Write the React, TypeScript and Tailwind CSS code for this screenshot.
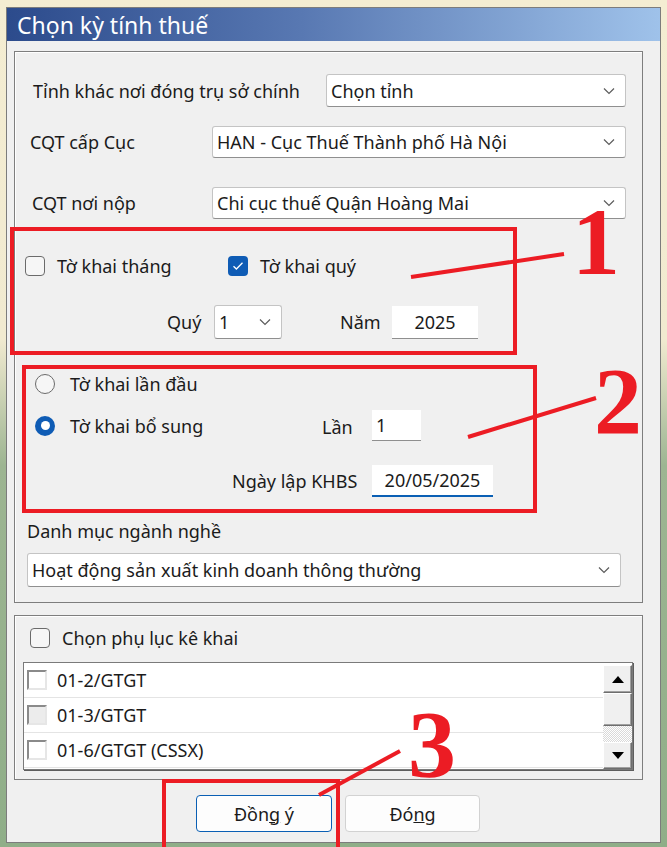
import React from 'react';

const font = "font-['Noto_Sans','Open_Sans',sans-serif]";

// chevron used in Win11 combo boxes
const Chevron: React.FC = () => (
  <svg width="12" height="8" viewBox="0 0 12 8" className="shrink-0">
    <path d="M1 1.5 L6 6.5 L11 1.5" fill="none" stroke="#5c5c5c" strokeWidth="1.2" />
  </svg>
);

type SelectProps = { value: string; className: string };

const Select: React.FC<SelectProps> = ({ value, className }) => (
  <div
    className={`flex items-center justify-between bg-white border border-[#c4c4c4] border-b-[#8f8f8f] rounded-[3px] pl-[4px] pr-[10px] ${className}`}
  >
    <span className="whitespace-nowrap">{value}</span>
    <Chevron />
  </div>
);

const Checkbox: React.FC<{ checked?: boolean }> = ({ checked }) =>
  checked ? (
    <div className="w-[20px] h-[20px] rounded-[4px] bg-[#0f5cb5] flex items-center justify-center shrink-0">
      <svg width="12" height="10" viewBox="0 0 12 10">
        <path d="M1.5 5.2 L4.4 8 L10.5 1.8" fill="none" stroke="#fff" strokeWidth="1.3" />
      </svg>
    </div>
  ) : (
    <div className="w-[20px] h-[20px] rounded-[4px] border border-[#6b6b6b] bg-[#f6f6f6] shrink-0" />
  );

const Radio: React.FC<{ checked?: boolean }> = ({ checked }) =>
  checked ? (
    <div className="w-[20px] h-[20px] rounded-full bg-[#0f5cb5] flex items-center justify-center shrink-0">
      <div className="w-[9px] h-[9px] rounded-full bg-white" />
    </div>
  ) : (
    <div className="w-[20px] h-[20px] rounded-full border border-[#6b6b6b] bg-[#f6f6f6] shrink-0" />
  );

// classic flat checkbox inside the list view
const FlatCheck: React.FC<{ grey?: boolean }> = ({ grey }) => (
  <div
    className={`w-[20px] h-[20px] border-2 border-t-[#8a8a8a] border-l-[#8a8a8a] border-r-[#e6e6e6] border-b-[#e6e6e6] shrink-0 ${
      grey ? 'bg-[#ececec]' : 'bg-white'
    }`}
  />
);

const ScrollButton: React.FC<{ up?: boolean; className: string }> = ({ up, className }) => (
  <div
    className={`bg-[#f0f0f0] border border-t-white border-l-white border-r-[#6e6e6e] border-b-[#6e6e6e] shadow-[inset_-1px_-1px_0_#a0a0a0] flex items-center justify-center ${className}`}
  >
    {up !== undefined && (
      <svg width="12" height="7" viewBox="0 0 12 7">
        {up ? <path d="M0 7 L6 0 L12 7 Z" fill="#000" /> : <path d="M0 0 L6 7 L12 0 Z" fill="#000" />}
      </svg>
    )}
  </div>
);

const rows = [
  { label: '01-2/GTGT', grey: false },
  { label: '01-3/GTGT', grey: true },
  { label: '01-6/GTGT (CSSX)', grey: false },
];

const App: React.FC = () => {
  return (
    <div
      className={`relative w-[667px] h-[847px] overflow-hidden pt-[7px] pl-[6px] text-[18px] leading-[22px] text-[#1b1b1b] ${font} bg-[linear-gradient(180deg,#f4edd2_0%,#f1ead0_40%,#9db592_55%,#8fae88_100%)]`}
    >
      {/* window */}
      <div className="w-[655px] h-[836px] border border-[#7c7c7c] bg-[#f0f0f0] flex flex-col">
        <div className="h-[33px] bg-[linear-gradient(90deg,#2c4b8c_0%,#5878b2_45%,#9fc2ea_100%)] flex items-center pl-[10px] text-white text-[23px] leading-[28px]">
          Chọn kỳ tính thuế
        </div>

        {/* group 1 */}
        <div className="mt-[10px] ml-[7px] w-[629px] h-[552px] border border-[#7e7e7e] shadow-[inset_1px_1px_0_#ffffff] flex flex-col pt-[22px]">
          <div className="flex items-center h-[33px] pl-[18px]">
            <span className="w-[293px] whitespace-nowrap">Tỉnh khác nơi đóng trụ sở chính</span>
            <Select value="Chọn tỉnh" className="w-[300px] h-[33px]" />
          </div>
          <div className="flex items-center h-[32px] pl-[15px] mt-[19px]">
            <span className="w-[182px]">CQT cấp Cục</span>
            <Select value="HAN - Cục Thuế Thành phố Hà Nội" className="w-[414px] h-[32px]" />
          </div>
          <div className="flex items-center h-[32px] pl-[17px] mt-[29px]">
            <span className="w-[180px]">CQT nơi nộp</span>
            <Select value="Chi cục thuế Quận Hoàng Mai" className="w-[414px] h-[32px]" />
          </div>

          {/* annotated box 1 */}
          <div className="mt-[8px] -ml-[5px] w-[507px] h-[128px] border-4 border-[#ec1c24] flex flex-col">
            <div className="mt-[25px] flex items-center h-[20px] pl-[11px]">
              <div className="w-[203px] flex items-center gap-[12px]">
                <Checkbox />
                <span>Tờ khai tháng</span>
              </div>
              <div className="flex items-center gap-[12px]">
                <Checkbox checked />
                <span>Tờ khai quý</span>
              </div>
            </div>
            <div className="mt-[29px] flex items-center h-[34px] pl-[153px]">
              <span className="w-[47px]">Quý</span>
              <Select value="1" className="w-[68px] h-[34px]" />
              <span className="ml-[58px] w-[52px]">Năm</span>
              <div className="w-[86px] h-[33px] bg-white border-b border-[#8f8f8f] flex items-center justify-center">
                2025
              </div>
            </div>
          </div>

          {/* annotated box 2 */}
          <div className="mt-[10px] ml-[7px] w-[515px] h-[148px] border-4 border-[#ec1c24] flex flex-col pl-[9px]">
            <div className="mt-[5px] flex items-center h-[20px] gap-[15px]">
              <Radio />
              <span>Tờ khai lần đầu</span>
            </div>
            <div className="mt-[16px] flex items-center h-[31px]">
              <div className="w-[287px] flex items-center gap-[15px]">
                <Radio checked />
                <span>Tờ khai bổ sung</span>
              </div>
              <span className="w-[50px] pt-[3px]">Lần</span>
              <div className="w-[49px] h-[31px] bg-white border-b border-[#8f8f8f] flex items-center pl-[4px]">1</div>
            </div>
            <div className="mt-[24px] flex items-center h-[32px] pl-[197px]">
              <span className="w-[140px] whitespace-nowrap">Ngày lập KHBS</span>
              <div className="w-[121px] h-[32px] bg-white border-b-2 border-[#0a5fb4] flex items-center justify-center">
                20/05/2025
              </div>
            </div>
          </div>

          <div className="mt-[7px] pl-[12px] h-[20px]">Danh mục ngành nghề</div>
          <Select value="Hoạt động sản xuất kinh doanh thông thường" className="mt-[13px] ml-[12px] w-[594px] h-[34px]" />
        </div>

        {/* group 2 */}
        <div className="mt-[12px] ml-[7px] w-[629px] h-[165px] border border-[#7e7e7e] shadow-[inset_1px_1px_0_#ffffff] flex flex-col pt-[12px]">
          <div className="flex items-center h-[20px] pl-[15px] gap-[12px]">
            <Checkbox />
            <span>Chọn phụ lục kê khai</span>
          </div>
          <div className="mt-[14px] ml-[8px] w-[610px] h-[108px] border border-[#7a7a7a] shadow-[1px_1px_0_#5e5e5e] bg-white flex">
            <div className="flex-1 flex flex-col">
              {rows.map((r) => (
                <div key={r.label} className="h-[35px] flex items-center gap-[10px] pl-[3px] border-b border-[#e4e4e4]">
                  <FlatCheck grey={r.grey} />
                  <span>{r.label}</span>
                </div>
              ))}
            </div>
            <div className="w-[29px] flex flex-col pt-[2px]">
              <ScrollButton up className="h-[28px]" />
              <ScrollButton className="h-[33px]" />
              <div className="h-[16px] bg-[repeating-conic-gradient(#ffffff_0%_25%,#d9d9d9_0%_50%)] bg-[length:2px_2px]" />
              <ScrollButton up={false} className="h-[27px]" />
            </div>
          </div>
        </div>

        {/* buttons */}
        <div className="mt-[15px] pl-[189px] flex gap-[13px]">
          <button className="w-[136px] h-[37px] rounded-[4px] border border-[#0a5fb4] bg-[#fdfdfd] text-[18px]">
            Đồn<span className="underline">g</span> ý
          </button>
          <button className="w-[135px] h-[37px] rounded-[4px] border border-[#d2d2d2] bg-[#fdfdfd] text-[18px]">
            Đó<span className="underline">n</span>g
          </button>
        </div>
      </div>

      {/* annotations drawn over the dialog */}
      <div className="absolute left-[162px] top-[779px] w-[178px] h-[80px] border-4 border-[#ec1c24] pointer-events-none" />
      <svg className="absolute inset-0 pointer-events-none" width="667" height="847">
        <line x1="411" y1="277" x2="564" y2="254" stroke="#ec1c24" strokeWidth="4" />
        <line x1="468" y1="437" x2="596" y2="398" stroke="#ec1c24" strokeWidth="4" />
        <line x1="319" y1="795" x2="400" y2="751" stroke="#ec1c24" strokeWidth="4" />
      </svg>
      <span className="absolute left-[572px] top-[194px] text-[96px] leading-[96px] font-bold text-[#ec1c24] font-['Liberation_Serif',serif]">
        1
      </span>
      <span className="absolute left-[594px] top-[354px] text-[96px] leading-[96px] font-bold text-[#ec1c24] font-['Liberation_Serif',serif]">
        2
      </span>
      <span className="absolute left-[408px] top-[697px] text-[96px] leading-[96px] font-bold text-[#ec1c24] font-['Liberation_Serif',serif]">
        3
      </span>
    </div>
  );
};

export default App;
